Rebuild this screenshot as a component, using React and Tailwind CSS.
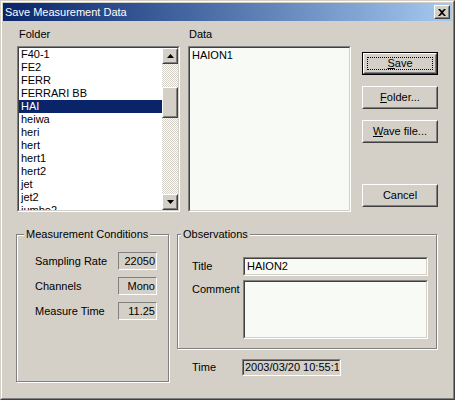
const FOLDERS = ['F40-1', 'FE2', 'FERR', 'FERRARI BB', 'HAI', 'heiwa', 'heri', 'hert', 'hert1', 'hert2', 'jet', 'jet2', 'jumbo2']

function Sunken({ className = '', inner = '', children }) {
  return (
    <div className={`border border-t-[#808080] border-l-[#808080] border-r-white border-b-white ${className}`}>
      <div className={`h-full border border-t-[#404040] border-l-[#404040] border-r-[#d4d0c8] border-b-[#d4d0c8] ${inner}`}>
        {children}
      </div>
    </div>
  )
}

function Raised({ className = '', inner = '', children }) {
  return (
    <div className={`border border-t-white border-l-white border-r-[#404040] border-b-[#404040] ${className}`}>
      <div className={`h-full border border-t-[#d4d0c8] border-l-[#d4d0c8] border-r-[#808080] border-b-[#808080] ${inner}`}>
        {children}
      </div>
    </div>
  )
}

function Btn({ children, def, className = '' }) {
  if (def) {
    return (
      <div className={`w-[76px] h-[23px] border border-black ${className}`}>
        <Raised className="h-full" inner="relative flex items-center justify-center">
          <span className="absolute inset-[2px] border border-dotted border-black" />
          {children}
        </Raised>
      </div>
    )
  }
  return (
    <Raised className={`w-[76px] h-[23px] ${className}`} inner="flex items-center justify-center">
      {children}
    </Raised>
  )
}

function Arrow({ up }) {
  return (
    <Raised className="h-[16px] shrink-0" inner="flex items-center justify-center bg-[#d4d0c8]">
      <svg width="7" height="4" viewBox="0 0 7 4">
        <polygon points={up ? '3.5,0 7,4 0,4' : '0,0 7,0 3.5,4'} fill="#000" />
      </svg>
    </Raised>
  )
}

function Group({ title, titleLeft, className = '', children }) {
  return (
    <div className={`relative border border-[#808080] shadow-[1px_1px_0_#fff,inset_1px_1px_0_#fff] ${className}`}>
      <span className={`absolute top-[-7px] ${titleLeft} px-[2px] bg-[#d4d0c8] leading-[13px] whitespace-nowrap`}>
        {title}
      </span>
      {children}
    </div>
  )
}

function Value({ label, value }) {
  return (
    <div className="flex items-center justify-between h-[18px] pl-[18px] pr-[11px]">
      <span>{label}</span>
      <div className="w-[39px] h-[18px] border border-t-[#808080] border-l-[#808080] border-r-white border-b-white flex items-center justify-end pr-[1px]">
        {value}
      </div>
    </div>
  )
}

export default function App() {
  return (
    <div className="w-[455px] h-[400px] bg-[#d4d0c8] text-black text-[11px] leading-[13px] font-['Liberation_Sans',Arial,sans-serif] border border-t-[#d4d0c8] border-l-[#d4d0c8] border-r-[#404040] border-b-[#404040] overflow-hidden">
      <div className="h-full border border-t-white border-l-white border-r-[#808080] border-b-[#808080] p-[1px] flex flex-col">
        {/* title bar */}
        <div className="h-[18px] shrink-0 flex items-center justify-between pl-[2px] pr-[2px] bg-linear-to-r from-[#0a246a] to-[#a6caf0]">
          <span className="text-white">Save Measurement Data</span>
          <Raised className="w-[16px] h-[14px]" inner="flex items-center justify-center bg-[#d4d0c8]">
            <svg width="8" height="7" viewBox="0 0 8 7">
              <path d="M0 0h2l2 2 2-2h2L5 3.5 8 7H6L4 5 2 7H0l3-3.5z" fill="#000" />
            </svg>
          </Raised>
        </div>

        <div className="flex flex-col pl-[13px]">
          {/* top row */}
          <div className="flex mt-[7px]">
            <div className="w-[163px] ml-[1px] flex flex-col">
              <div className="h-[13px] pl-[2px] mb-[5px]">Folder</div>
              <Sunken className="h-[166px]" inner="flex">
                <div className="flex-1 bg-white overflow-hidden">
                  {FOLDERS.map((f) => (
                    <div
                      key={f}
                      className={`h-[13px] pl-[2px] whitespace-nowrap ${f === 'HAI' ? 'bg-[#0a246a] text-white' : ''}`}
                    >
                      {f}
                    </div>
                  ))}
                </div>
                <div className="w-[16px] flex flex-col">
                  <Arrow up />
                  <div className="flex-1 bg-[image:repeating-conic-gradient(#fff_0_25%,#d4d0c8_0_50%)] bg-size-[2px_2px]">
                    <Raised className="h-[31px] mt-[23px]" inner="bg-[#d4d0c8]" />
                  </div>
                  <Arrow />
                </div>
              </Sunken>
            </div>

            <div className="w-[163px] ml-[8px] flex flex-col">
              <div className="h-[13px] pl-[1px] mb-[5px]">Data</div>
              <Sunken className="h-[166px]" inner="bg-[#f8fbf5] pt-[1px] pl-[2px]">
                HAION1
              </Sunken>
            </div>

            <div className="w-[76px] ml-[11px] pt-[24px] flex flex-col">
              <Btn def>
                <span>
                  <u>S</u>ave
                </span>
              </Btn>
              <Btn className="mt-[11px]">
                <span>
                  <u>F</u>older...
                </span>
              </Btn>
              <Btn className="mt-[11px]">
                <span>
                  <u>W</u>ave file...
                </span>
              </Btn>
              <Btn className="mt-[41px]">Cancel</Btn>
            </div>
          </div>

          {/* bottom row */}
          <div className="flex mt-[22px]">
            <Group title="Measurement Conditions" titleLeft="left-[7px]" className="w-[153px] h-[148px] pt-[17px] flex flex-col gap-[7px]">
              <Value label="Sampling Rate" value="22050" />
              <Value label="Channels" value="Mono" />
              <Value label="Measure Time" value="11.25" />
            </Group>

            <div className="ml-[8px] flex flex-col">
              <Group title="Observations" titleLeft="left-[3px]" className="w-[260px] h-[115px] pt-[22px]">
                <div className="flex items-center">
                  <span className="w-[65px] pl-[14px]">Title</span>
                  <Sunken className="w-[185px] h-[19px]" inner="bg-[#f8fbf5] pl-[2px] flex items-center">
                    HAION2
                  </Sunken>
                </div>
                <div className="flex mt-[4px]">
                  <span className="w-[65px] pl-[14px] pt-[3px]">Comment</span>
                  <Sunken className="w-[185px] h-[59px]" inner="bg-[#f8fbf5]" />
                </div>
              </Group>

              <div className="flex items-center mt-[10px]">
                <span className="w-[65px] pl-[15px]">Time</span>
                <Sunken className="w-[99px] h-[17px]" inner="pl-[1px] flex items-center overflow-hidden whitespace-nowrap">
                  2003/03/20 10:55:12
                </Sunken>
              </div>
            </div>
          </div>
        </div>
      </div>
    </div>
  )
}
